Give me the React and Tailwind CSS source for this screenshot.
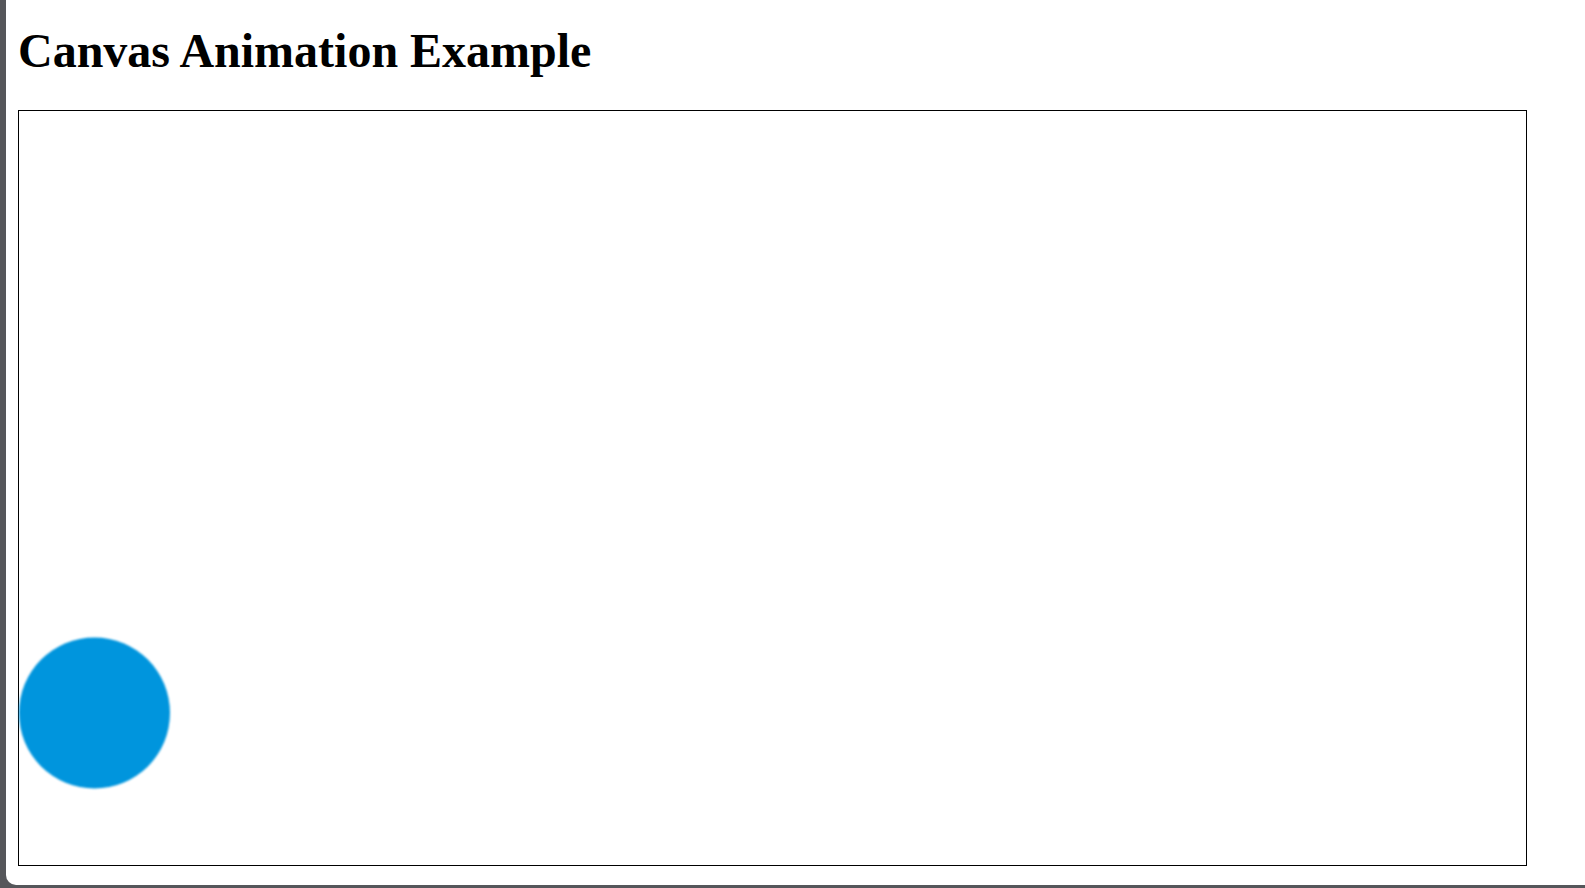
export default function App() {
  return (
    <div className="w-[1585px] h-[888px] bg-[#55565a] pl-[6px] pb-[3px] overflow-hidden">
      <div className="h-full bg-white rounded-bl-[10px] pl-[12px] pt-[24px] font-['Liberation_Serif',serif] text-black">
        <h1 className="text-[48px] leading-[53px] font-bold m-0">Canvas Animation Example</h1>
        <div className="relative mt-[33px] w-[1509px] h-[756px] border border-black bg-white">
          <svg className="absolute left-0 top-0 blur-[1px]" width="1507" height="754">
            <circle cx="75.5" cy="602" r="75.5" fill="#0095dd" />
          </svg>
        </div>
      </div>
    </div>
  );
}
